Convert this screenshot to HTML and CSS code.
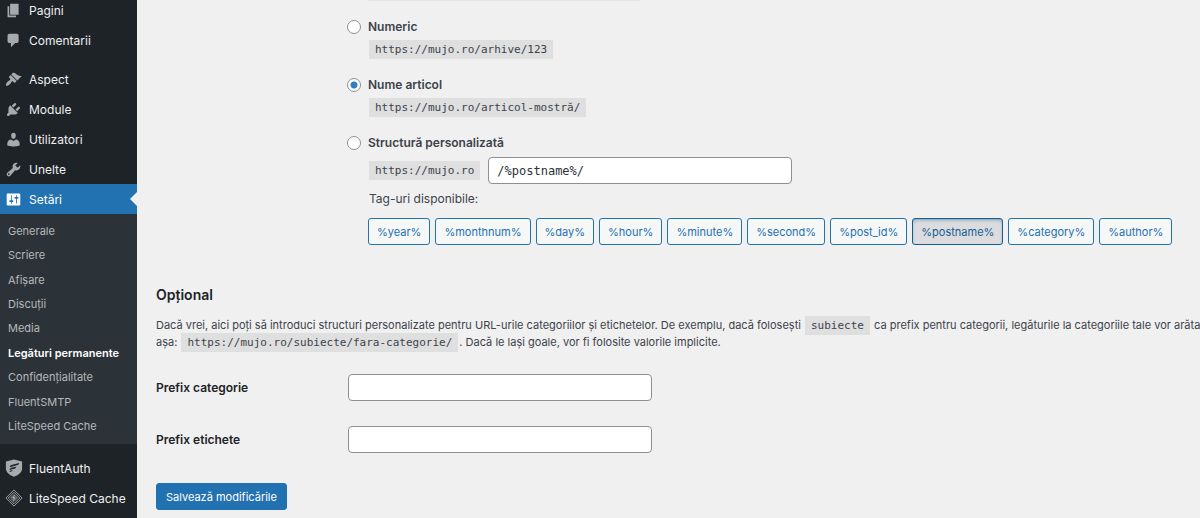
FILE: index.html
```html
<!DOCTYPE html>
<html lang="ro">
<head>
    <meta charset="UTF-8">
    <meta name="viewport" content="width=device-width, initial-scale=1.0">
    <title>Setări legături permanente</title>
    <link rel="stylesheet" href="styles.css">
</head>
<body>
    <div class="admin">
        <nav class="sidebar">
            <ul class="menu">
                <li><a href="#">
                    <svg class="icon" viewBox="0 0 20 20"><path d="M6 15V2h10v13H6zm-1 1h8v2H3V5h2v11z"/></svg>
                    Pagini</a></li>
                <li><a href="#">
                    <svg class="icon" viewBox="0 0 20 20"><path d="M5 2h9c1.100 0 2 .9 2 2v7c0 1.100-.9 2-2 2h-2l-5 5v-5H5c-1.100 0-2-.9-2-2V4c0-1.100.9-2 2-2z"/></svg>
                    Comentarii</a></li>
                <li class="separated"><a href="#">
                    <svg class="icon" viewBox="0 0 20 20"><path d="M14.480 11.060L7.410 3.990l1.500-1.500c.5-.56 2.300-.47 3.510.32 1.210.8 1.430 1.280 2.910 2.100 1.180.64 2.450 1.260 4.450.85zm-.71.710L6.700 4.700 4.930 6.470c-.39.39-.39 1.020 0 1.410l1.060 1.060c.39.39.39 1.030 0 1.420-.6.600-1.430 1.110-2.210 1.690-.35.26-.7.530-1.010.84C1.430 14.230.4 16.080 1.400 17.070c.99 1 2.840-.03 4.180-1.360.31-.31.580-.66.850-1.020.57-.78 1.080-1.610 1.690-2.210.39-.39 1.020-.39 1.410 0l1.060 1.060c.39.390 1.020.390 1.410 0z"/></svg>
                    Aspect</a></li>
                <li><a href="#">
                    <svg class="icon" viewBox="0 0 20 20"><path d="M13.110 4.360L9.870 7.600 8 5.730l3.240-3.240c.35-.34 1.050-.2 1.560.32.520.51.660 1.210.310 1.550zm-8 1.770l.91-1.120 9.010 9.010-1.190.84c-.71.710-2.630 1.160-3.820 1.160H6.140L4.900 17.260c-.59.59-1.540.59-2.120 0-.59-.58-.59-1.530 0-2.120l1.240-1.240v-3.880c0-1.130.4-3.190 1.090-3.890zm7.260 3.970l3.240-3.240c.34-.35 1.040-.21 1.550.31.520.51.660 1.210.31 1.550l-3.240 3.250z"/></svg>
                    Module</a></li>
                <li><a href="#">
                    <svg class="icon" viewBox="0 0 20 20"><path d="M10 9.250c-2.270 0-2.730-3.440-2.730-3.440C7 4.020 7.820 2 9.970 2c2.160 0 2.980 2.020 2.710 3.810 0 0-.41 3.440-2.680 3.440zm0 2.570L12.720 10c2.390 0 4.520 2.330 4.520 4.530v2.490s-3.650 1.130-7.240 1.130c-3.650 0-7.240-1.130-7.240-1.130v-2.490c0-2.250 1.940-4.480 4.470-4.480z"/></svg>
                    Utilizatori</a></li>
                <li><a href="#">
                    <svg class="icon" viewBox="0 0 20 20"><path d="M16.680 9.770c-1.340 1.340-3.300 1.670-4.950.99l-5.410 6.520c-.99.990-2.590.990-3.580 0s-.99-2.590 0-3.570l6.520-5.420c-.68-1.650-.35-3.610.99-4.950 1.280-1.280 3.120-1.620 4.720-1.060l-2.890 2.890 2.820 2.820 2.860-2.870c.53 1.580.18 3.390-1.080 4.650zM3.810 16.210c.4.390 1.040.390 1.430 0 .4-.4.4-1.040 0-1.430-.39-.4-1.030-.4-1.430 0-.39.390-.39 1.030 0 1.430z"/></svg>
                    Unelte</a></li>
                <li class="current">
                    <a href="#">
                    <svg class="icon" viewBox="0 0 20 20"><path d="M18 16V4c0-.55-.45-1-1-1H3c-.55 0-1 .45-1 1v12c0 .55.450 1 1 1h14c.55 0 1-.45 1-1zM8 11h1c.55 0 1 .45 1 1s-.45 1-1 1H8v1.500c0 .28-.22.500-.5.500s-.5-.22-.5-.5V13H6c-.55 0-1-.45-1-1s.45-1 1-1h1V5.500c0-.28.220-.5.500-.5s.5.220.500.500V11zm5-2h-1c-.55 0-1-.45-1-1s.45-1 1-1h1V5.500c0-.28.220-.5.500-.5s.5.220.500.500V7h1c.55 0 1 .45 1 1s-.45 1-1 1h-1v5.500c0 .28-.22.500-.5.500s-.5-.22-.5-.5V9z"/></svg>
                    Setări</a>
                    <ul class="submenu">
                        <li><a href="#">Generale</a></li>
                        <li><a href="#">Scriere</a></li>
                        <li><a href="#">Afișare</a></li>
                        <li><a href="#">Discuții</a></li>
                        <li><a href="#">Media</a></li>
                        <li><a href="#" class="selected">Legături permanente</a></li>
                        <li><a href="#">Confidențialitate</a></li>
                        <li><a href="#">FluentSMTP</a></li>
                        <li><a href="#">LiteSpeed Cache</a></li>
                    </ul>
                </li>
                <li class="separated"><a href="#">
                    <svg class="icon icon-large" viewBox="0 0 20 20"><path fill-rule="evenodd" d="M10 .5l9 2.200v7.800c0 4-3.500 7.300-9 9.200-5.500-1.900-9-5.200-9-9.200V2.700zM5 9.200c.5-1.800 1.600-2.500 3.200-2.900L15.800 4.500c-.4 1.500-1.300 2.200-2.700 2.500zM5 12.200c.5-1.700 1.500-2.300 3-2.700l4.500-1c-.4 1.500-1.200 2.100-2.600 2.400zM5 14.600c.3-1.200 1-1.800 2-2l1.500-.3c-.4 1.200-1.600 1.600-3.500 2.300z"/></svg>
                    FluentAuth</a></li>
                <li><a href="#">
                    <svg class="icon icon-large icon-line" viewBox="0 0 20 20"><path d="M10 1l9 9-9 9-9-9z"/><path d="M10 3.600l6.400 6.400-6.400 6.400L3.600 10z"/><path d="M10 6.200l3.800 3.800-3.800 3.800L6.200 10z"/><path class="bolt" d="M11 6l-3.500 4 2 .7L8.700 14l3.800-4.200-2-.7z"/></svg>
                    LiteSpeed Cache</a></li>
            </ul>
        </nav>

        <main class="content">
            <form>
                <div class="structures">
                    <div class="previous-code"></div>
                    <div class="structure">
                        <input type="radio" name="structure" id="numeric">
                        <label for="numeric">Numeric</label>
                        <div class="example"><code>https://mujo.ro/arhive/123</code></div>
                    </div>
                    <div class="structure">
                        <input type="radio" name="structure" id="postname" checked>
                        <label for="postname">Nume articol</label>
                        <div class="example"><code>https://mujo.ro/articol-mostră/</code></div>
                    </div>
                    <div class="structure">
                        <input type="radio" name="structure" id="custom">
                        <label for="custom">Structură personalizată</label>
                        <div class="example custom">
                            <code>https://mujo.ro</code>
                            <input type="text" class="text-field code-field" value="/%postname%/" aria-label="Structură personalizată">
                        </div>
                    </div>
                    <p class="tags-title">Tag-uri disponibile:</p>
                    <div class="tags">
                        <button type="button">%year%</button>
                        <button type="button">%monthnum%</button>
                        <button type="button">%day%</button>
                        <button type="button">%hour%</button>
                        <button type="button">%minute%</button>
                        <button type="button">%second%</button>
                        <button type="button">%post_id%</button>
                        <button type="button" class="active">%postname%</button>
                        <button type="button">%category%</button>
                        <button type="button">%author%</button>
                    </div>
                </div>

                <h2>Opțional</h2>
                <p class="description">Dacă vrei, aici poți să introduci structuri personalizate pentru URL-urile categoriilor și etichetelor. De exemplu, dacă folosești <code>subiecte</code> ca prefix pentru categorii, legăturile la categoriile tale vor arăta<br>așa: <code>https://mujo.ro/subiecte/fara-categorie/</code>. Dacă le lași goale, vor fi folosite valorile implicite.</p>

                <div class="form-row">
                    <label for="category-base">Prefix categorie</label>
                    <input type="text" class="text-field" id="category-base">
                </div>
                <div class="form-row">
                    <label for="tag-base">Prefix etichete</label>
                    <input type="text" class="text-field" id="tag-base">
                </div>

                <button type="submit" class="save">Salvează modificările</button>
            </form>
        </main>
    </div>
</body>
</html>
```
FILE: styles.css
```css
:root {
    --menu-background: #1d2327;
    --submenu-background: #2c3338;
    --primary-color: #2271b1;
    --background-color: #f0f0f1;
    --text-color: #3c434a;
    --heading-color: #1d2327;
    --border-color: #8c8f94;
}

* {
    box-sizing: border-box;
}

body {
    margin: 0;
    font-family: Inter, sans-serif;
    font-size: 12px;
    line-height: 17px;
    background-color: var(--background-color);
    color: var(--text-color);
    overflow: hidden;
}

.admin {
    display: flex;
    min-height: 100vh;
}

/* Sidebar */
.sidebar {
    flex: 0 0 137px;
    background-color: var(--menu-background);
}

.menu,
.submenu {
    list-style: none;
    margin: 0;
    padding: 0;
}

.menu {
    margin-top: -5px;
}

.menu a {
    display: flex;
    align-items: center;
    color: #f0f0f1;
    text-decoration: none;
}

.menu > li > a {
    position: relative;
    height: 30px;
    padding-left: 5px;
    gap: 7px;
    white-space: nowrap;
}

.menu .separated {
    margin-top: 9px;
}

.icon {
    flex: none;
    width: 17px;
    height: 17px;
    fill: #a7aaad;
}

.icon-large {
    width: 18px;
    height: 20px;
    margin-right: -1px;
}

.icon-line {
    fill: none;
    stroke: #a7aaad;
    stroke-width: 1;
}

.icon-line .bolt {
    fill: #a7aaad;
    stroke: none;
}

.menu > .current > a {
    background-color: var(--primary-color);
    color: #fff;
}

.current > a .icon {
    fill: #fff;
}

.current > a::after {
    content: "";
    position: absolute;
    right: 0;
    top: 8px;
    border: 7px solid transparent;
    border-left-width: 0;
    border-right-color: var(--background-color);
}

.submenu {
    display: grid;
    grid-auto-rows: 1fr;
    min-height: 230px;
    padding: 5px 0;
    background-color: var(--submenu-background);
    font-size: 11px;
}

.submenu a {
    height: 100%;
    padding-left: 8px;
    color: #b5b8bb;
    white-space: nowrap;
}

.submenu .selected {
    color: #fff;
    font-weight: 600;
}

/* Content */
.content {
    flex: 1;
    min-width: 0;
    padding-left: 19px;
}

code {
    display: inline-block;
    padding: 1px 6px;
    background-color: #dfdfe0;
    font-family: "DejaVu Sans Mono", monospace;
    font-size: 11px;
    line-height: 17px;
}

.structures {
    margin-left: 191px;
}

.previous-code {
    width: 272px;
    height: 1px;
    margin-left: 21px;
    background-color: #e6e6e7;
}

.structure {
    display: grid;
    grid-template-columns: 14px 1fr;
    column-gap: 7px;
    align-items: center;
    padding-top: 17px;
}

.structure label {
    font-weight: 600;
}

input[type="radio"] {
    appearance: none;
    width: 14px;
    height: 14px;
    margin: 0;
    border: 1px solid var(--border-color);
    border-radius: 50%;
    background-color: #fff;
}

input[type="radio"]:checked {
    background: radial-gradient(circle, #2b7fc4 3px, #fff 4px);
}

.example {
    grid-column: 2;
    margin: 5px 0 0 1px;
    height: 19px;
    display: flex;
    align-items: center;
}

.custom {
    height: 27px;
    margin-top: 6px;
    gap: 8px;
}

.text-field {
    width: 304px;
    height: 27px;
    padding: 0 8px;
    border: 1px solid var(--border-color);
    border-radius: 4px;
    background-color: #fff;
    color: #2c3338;
}

.code-field {
    font-family: "DejaVu Sans Mono", monospace;
    font-size: 12px;
}

.tags-title {
    margin: 6px 0 11px 22px;
}

.tags {
    display: flex;
    gap: 5px;
    margin-left: 21px;
}

.tags button {
    height: 27px;
    padding: 0 8px;
    border: 1px solid var(--primary-color);
    border-radius: 3px;
    background-color: #f6f7f7;
    color: var(--primary-color);
    font-family: inherit;
    font-size: 11px;
    cursor: pointer;
}

.tags .active {
    background-color: #dcdcde;
    border-color: #135e96;
    color: #135e96;
    box-shadow: inset 0 2px 5px -3px #0a4b78;
}

h2 {
    margin: 40px 0 12px;
    color: var(--heading-color);
    font-size: 14px;
    font-weight: 600;
    line-height: 20px;
}

.description {
    margin: 0 0 23px;
    font-size: 11px;
    white-space: nowrap;
}

.description code {
    margin: -1px 1px;
}

.form-row {
    display: flex;
    align-items: center;
    margin-bottom: 25px;
}

.form-row label {
    flex: 0 0 192px;
    color: var(--heading-color);
    font-weight: 600;
}

.save {
    height: 27px;
    margin-top: 5px;
    padding: 0 9px;
    border: 1px solid var(--primary-color);
    border-radius: 3px;
    background-color: var(--primary-color);
    color: #fff;
    font-family: inherit;
    font-size: 11px;
    cursor: pointer;
}
```
